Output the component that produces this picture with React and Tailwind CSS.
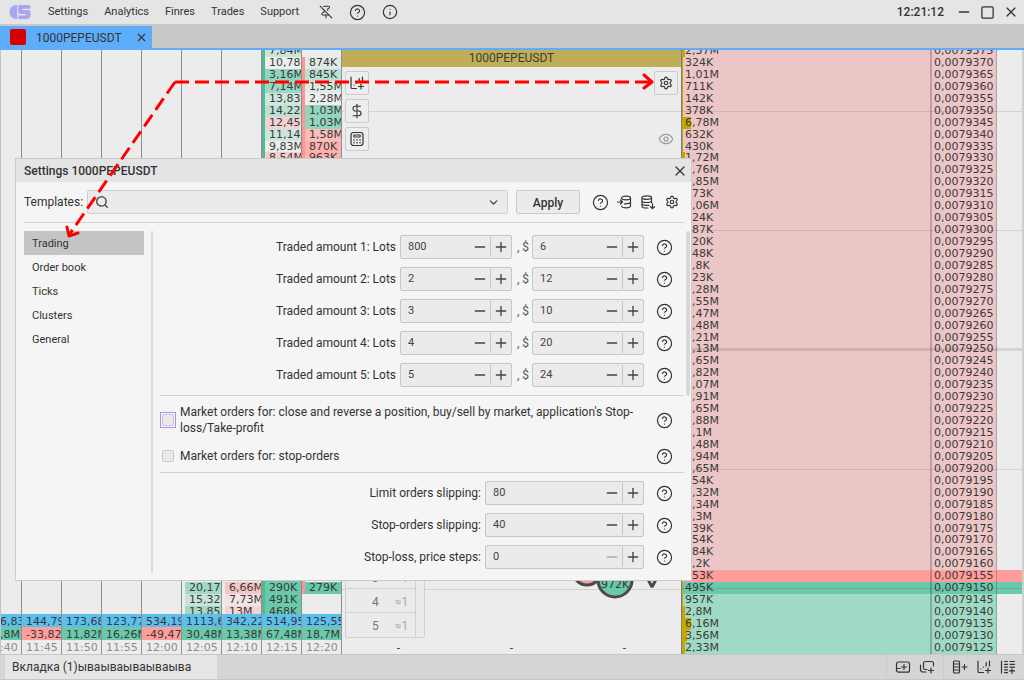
import React, { useState } from "react";
import {
  ChevronDown,
  CircleQuestionMark,
  DollarSign,
  Eye,
  Info,
  Minus,
  PinOff,
  Plus,
  Search,
  Settings,
  Square,
  X,
} from "lucide-react";

const MENU = ["Settings", "Analytics", "Finres", "Trades", "Support"];
const SECTIONS = ["Trading", "Order book", "Ticks", "Clusters", "General"];

// Order book volumes, from the highest price down
const VOLUMES = [
  "2,37M", "324K", "1,01M", "711K", "142K", "378K", "6,78M", "632K", "430K", "1,72M",
  "1,76M", "1,85M", "573K", "1,06M", "324K", "187K", "220K", "348K", "9,8K", "423K",
  "1,28M", "1,55M", "2,47M", "1,48M", "1,21M", "2,13M", "1,65M", "1,82M", "1,07M", "1,91M",
  "2,65M", "1,88M", "1,1M", "1,48M", "1,94M", "1,65M", "354K", "1,32M", "2,34M", "1,3M",
  "239K", "454K", "384K", "8,2K", "153K", "495K", "957K", "2,8M", "6,16M", "3,56M", "2,33M",
];
const TOP_PRICE = 79375;
const BEST_ASK = 44;
const BEST_BID = 45;
const BAR_WIDTHS = { 0: 3, 6: 9, 9: 3, 47: 3, 48: 9, 49: 5, 50: 3 };

const GREEN_BAR = "border-[#54b998]";
const RED_BAR = "border-[#ff9494]";

// Each column: time, two totals and the cells that are filled, keyed by price row
const CLUSTERS = [
  { time: "11:40", total: "226,83", delta: "22,8M", up: true, cells: {} },
  { time: "11:45", total: "144,79", delta: "-33,82", up: false, cells: {} },
  { time: "11:50", total: "173,68", delta: "11,82M", up: true, cells: {} },
  { time: "11:55", total: "123,77", delta: "16,26M", up: true, cells: {} },
  { time: "12:00", total: "534,19", delta: "-49,47", up: false, cells: {} },
  {
    time: "12:05", total: "1113,6", delta: "30,48M", up: true,
    cells: {
      44: ["18,42", "bg-[#ececec]"],
      45: ["20,17", "bg-[#a3d9c6]"],
      46: ["15,32", "bg-[#c9e3da]"],
      47: ["13,85", "bg-[#a3d9c6]"],
    },
  },
  {
    time: "12:10", total: "342,22", delta: "13,38M", up: true,
    cells: {
      44: ["9,41M", "bg-[#ececec]"],
      45: ["6,66M", "bg-[#f6c6c6]"],
      46: ["7,73M", "bg-[#f0e4e4]"],
      47: ["13M", "bg-[#f3d3d3]"],
    },
  },
  {
    time: "12:15", total: "514,95", delta: "67,48M", up: true, bar: GREEN_BAR,
    cells: {
      0: ["7,84M", "bg-[#c8e6da]"],
      1: ["10,78", "bg-[#f0efef]"],
      2: ["3,16M", "bg-[#93d4bc]"],
      3: ["7,14M", "bg-[#9bd8c1]"],
      4: ["13,83", "bg-[#cfe7de]"],
      5: ["14,22", "bg-[#bce1d3]"],
      6: ["12,45", "bg-[#f4d2d2]"],
      7: ["11,14", "bg-[#cbe6dc]"],
      8: ["9,83M", "bg-[#eceeed]"],
      9: ["8,54M", "bg-[#f6cccc]"],
      44: ["312K", "bg-[#69c9aa]"],
      45: ["290K", "bg-[#69c9aa]"],
      46: ["491K", "bg-[#69c9aa]"],
      47: ["468K", "bg-[#69c9aa]"],
    },
  },
  {
    time: "12:20", total: "125,55", delta: "18,7M", up: true, bar: RED_BAR,
    cells: {
      1: ["874K", "bg-[#e0ebe7]"],
      2: ["845K", "bg-[#b9e0d2]"],
      3: ["1,55M", "bg-[#dcebe5]"],
      4: ["2,28M", "bg-[#eeeeee]"],
      5: ["1,03M", "bg-[#93d6be]"],
      6: ["1,03M", "bg-[#93d6be]"],
      7: ["1,58M", "bg-[#fbbcbc]"],
      8: ["870K", "bg-[#ffb0b0]"],
      9: ["963K", "bg-[#ffb0b0]"],
      44: ["1,2M", "bg-[#ececec]"],
      45: ["279K", "bg-[#69c9aa]"],
    },
  },
];

/* ---------- icons that lucide does not have ---------- */

const Glyph = ({ children, size = 16, className = "" }) => (
  <svg
    width={size}
    height={size}
    viewBox="0 0 16 16"
    fill="none"
    stroke="currentColor"
    strokeWidth="1.2"
    strokeLinecap="round"
    strokeLinejoin="round"
    aria-hidden="true"
    className={className}
  >
    {children}
  </svg>
);

const Logo = () => (
  <svg width="22" height="16" viewBox="0 0 22 16" aria-hidden="true">
    <path d="M8.200 1v14H7.500C3.500 15 0.500 12 0.500 8S3.500 1 7.500 1Z" fill="#a9a6f2" />
    <path d="M10 1h9.500a2 2 0 0 1 2 2v1.700H13.500v1.300h6a2 2 0 0 1 2 2V11a4 4 0 0 1-4 4H9.200v-3.600h7.300v-1.300H11a2 2 0 0 1-1.800-2V2a1 1 0 0 1 .8-1Z" fill="#a9a6f2" />
  </svg>
);

const ChartPlusIcon = () => (
  <Glyph>
    <path d="M2 2v10.500a1 1 0 0 0 1 1h4.500M5 10.200l.1-.1M7.500 8.200v-.1M10.200 3.500v3.500M13.500 2v5M9.500 11.500h5M12 9v5" />
  </Glyph>
);

const CalculatorIcon = () => (
  <Glyph>
    <rect x="2" y="1.500" width="12" height="13" rx="2.500" />
    <rect x="4.800" y="4" width="6.400" height="2" rx="0.500" />
    <path d="M5 9h.1M8 9h.1M11 9h.1M5 11.700h.1M8 11.700h.1M11 11.700h.1" strokeWidth="1.600" />
  </Glyph>
);

const DbImportIcon = () => (
  <Glyph>
    <path d="M5.500 4c0-1 1.800-1.800 4.500-1.800s4.500.8 4.500 1.800v8c0 1-1.800 1.800-4.500 1.800S5.500 13 5.500 12M5.500 4c0 1 1.800 1.800 4.500 1.800s4.500-.8 4.500-1.800M8.500 9.800c3.300.1 6-.6 6-1.800M1.500 8h5M4.500 6l2 2-2 2" />
  </Glyph>
);

const DbSaveIcon = () => (
  <Glyph>
    <path d="M2 3.600C2 2.600 4 1.800 6.500 1.800s5 .8 5 1.800-2.500 1.800-5 1.800S2 4.600 2 3.600ZM2 3.600v8.600c0 1 2 1.800 4.500 1.800H8M11.500 3.600v5M2 6.700c0 1 2 1.800 4.500 1.800s5-.8 5-1.800M2 9.600c0 1 2 1.800 4.500 1.800H9M12.500 9.500v5M10.500 12.700l2 1.900 2-1.900" />
  </Glyph>
);

const AddTabIcon = () => (
  <Glyph>
    <path d="M6.500 13.200H3.500a2 2 0 0 1-2-2V5a2 2 0 0 1 2-2h9a2 2 0 0 1 2 2v6.200a2 2 0 0 1-2 2H6.500M1.500 9.500h3.500M6.500 8h5M9 5.500v5" />
  </Glyph>
);

const AddWindowIcon = () => (
  <Glyph>
    <path d="M8 10.500H6A1.500 1.500 0 0 1 4.500 9V4.500A2 2 0 0 1 6.500 2.500h6a2 2 0 0 1 2 2V7M1.500 6v4.500a2.500 2.500 0 0 0 2.500 2.500h3M9.500 11.500h5M12 9v5" />
  </Glyph>
);

const AddBookIcon = () => (
  <Glyph>
    <path d="M1.500 3a1 1 0 0 1 1-1h4a1 1 0 0 1 1 1v10a1 1 0 0 1-1 1h-4a1 1 0 0 1-1-1ZM1.500 5h6M1.500 8h6M1.500 11h6M10 8h5M12.500 5.500v5" />
  </Glyph>
);

const AddTradesIcon = () => (
  <Glyph>
    <path d="M1.500 2v12M4.500 2.500h3M4.500 5.300h3M4.500 8.100h3M4.500 10.900h3M4.500 13.700h3M10 2.500h4.500M10 5.300h4.500M10 8.100h4.500M9.500 11.900h5M12 9.800v4.500" />
  </Glyph>
);

/* ---------- shared controls ---------- */

const HelpButton = () => (
  <button aria-label="Help" className="flex size-6 shrink-0 items-center justify-center text-[#333]">
    <CircleQuestionMark size={17} strokeWidth={1.7} />
  </button>
);

const NumberField = ({ id, label, initial, className }) => {
  const [value, setValue] = useState(initial);
  const step = (d) => setValue((v) => Math.max(0, Number(v) + d));

  return (
    <div className={`flex h-6 items-center rounded-xs border border-[#c6c6c6] bg-[#ebebeb] ${className}`}>
      <input
        id={id}
        aria-label={label}
        value={value}
        onChange={(e) => setValue(e.target.value)}
        className="w-0 flex-1 bg-transparent pl-[7px] text-[11px] text-[#444] outline-none"
      />
      <button
        aria-label="Decrease"
        onClick={() => step(-1)}
        disabled={Number(value) === 0}
        className="flex h-full w-5 items-center justify-center text-[#444] disabled:text-[#aaa]"
      >
        <Minus size={16} strokeWidth={2} />
      </button>
      <button
        aria-label="Increase"
        onClick={() => step(1)}
        className="flex h-5 w-[21px] items-center justify-center border-l border-[#c6c6c6] text-[#444]"
      >
        <Plus size={16} strokeWidth={2} />
      </button>
    </div>
  );
};

const AmountRow = ({ n, lots, usd }) => (
  <div className="flex items-center justify-end leading-[18px]">
    <label htmlFor={`lots-${n}`} className="mr-1">Traded amount {n}: Lots</label>
    <NumberField id={`lots-${n}`} initial={lots} className="w-28" />
    <label htmlFor={`usd-${n}`} className="w-5 text-right whitespace-pre text-[#555]">, $ </label>
    <NumberField id={`usd-${n}`} initial={usd} className="w-28" />
    <div className="ml-2"><HelpButton /></div>
  </div>
);

const SlippingRow = ({ id, label, value }) => (
  <div className="flex items-center justify-end">
    <label htmlFor={id} className="mr-1">{label}</label>
    <NumberField id={id} initial={value} className="w-[159px]" />
    <div className="ml-2"><HelpButton /></div>
  </div>
);

/* ---------- window chrome ---------- */

const TitleBar = () => (
  <header className="flex h-6 shrink-0 items-center bg-[#e5e5e5] pl-[9px] text-[#333]">
    <Logo />
    <nav className="ml-[17px] flex gap-4 text-[11px]">
      {MENU.map((m) => (
        <button key={m}>{m}</button>
      ))}
    </nav>
    <div className="ml-5 flex items-center gap-4">
      <button aria-label="Unpin"><PinOff size={14} strokeWidth={1.8} /></button>
      <button aria-label="Help"><CircleQuestionMark size={17} strokeWidth={1.7} /></button>
      <button aria-label="About"><Info size={16} strokeWidth={1.7} /></button>
    </div>
    <time className="ml-auto text-xs font-medium">12:21:12</time>
    <div className="mr-[5px] ml-3 flex items-center gap-2">
      <button aria-label="Minimize"><Minus size={16} strokeWidth={2} /></button>
      <button aria-label="Maximize"><Square size={15} strokeWidth={2} /></button>
      <button aria-label="Close"><X size={16} strokeWidth={1.8} /></button>
    </div>
  </header>
);

const TabStrip = () => (
  <div className="flex h-[26px] shrink-0 items-end border-b-2 border-[#5eadfb] bg-[#c8c8c8]">
    <div className="flex h-[22px] w-[152px] items-center bg-[#5eadfb] pl-2.5 text-[#333]">
      <span className="size-4 rounded-xs bg-[#d80000]" />
      <span className="ml-2.5 pt-0.5 text-xs">1000PEPEUSDT</span>
      <button aria-label="Close tab" className="ml-auto pr-1"><X size={13} strokeWidth={2} /></button>
    </div>
  </div>
);

const BottomBar = () => (
  <footer className="flex h-[26px] shrink-0 items-center border-y border-[#c6c6c6] bg-[#d5d5d5] pl-[5px] text-[#333]">
    <button className="h-full w-[212px] bg-[#e5e5e5] pl-[7px] text-left text-xs">
      Вкладка (1)ываываываываыва
    </button>
    <div className="ml-auto flex h-full items-center gap-2 border-l border-[#cacaca] px-2">
      <button aria-label="Add tab"><AddTabIcon /></button>
      <button aria-label="Add window"><AddWindowIcon /></button>
    </div>
    <div className="flex h-full items-center gap-2 border-l border-[#cacaca] px-2">
      <button aria-label="Add order book"><AddBookIcon /></button>
      <button aria-label="Add chart"><ChartPlusIcon /></button>
      <button aria-label="Add trades"><AddTradesIcon /></button>
    </div>
  </footer>
);

/* ---------- workspace panes ---------- */

const ClusterColumn = ({ time, total, delta, up, bar, cells }) => (
  <div className="flex w-10 shrink-0 flex-col overflow-hidden border-r border-[#8f8f8f]">
    <div className="min-h-0 flex-1 overflow-hidden">
      {/* taller than its box, so the rows line up with the order book */}
      <div className="-mt-[5px] flex h-[calc(100%+45px)] flex-col">
        {VOLUMES.map((_, i) => {
          const cell = cells[i];
          return (
            <div
              key={i}
              className={`flex min-h-0 flex-1 basis-0 items-center border-l-[3px] ${cell && bar ? bar : "border-transparent"}`}
            >
              {cell && (
                <span className={`h-full w-full overflow-hidden pl-1 leading-3 ${cell[1]}`}>{cell[0]}</span>
              )}
            </div>
          );
        })}
      </div>
    </div>
    <div className="h-10 shrink-0 *:h-[13px] *:overflow-hidden *:pl-1 *:leading-4">
      <p className="bg-[#5bc0ee]">{total}</p>
      <p className={up ? "bg-[#69c9aa]" : "bg-[#ff9d9d]"}>{delta}</p>
      <p className="text-[#8c8c8c]">{time}</p>
    </div>
  </div>
);

const ClusterPane = () => (
  <section className="flex w-[341px] shrink-0 justify-end overflow-hidden font-['DejaVu_Sans',sans-serif] text-[11px] text-[#3a3a3a]">
    {CLUSTERS.map((c) => (
      <ClusterColumn key={c.time} {...c} />
    ))}
  </section>
);

const ToolButton = ({ label, children }) => (
  <button
    aria-label={label}
    className="flex size-6 items-center justify-center rounded-xs border border-[#cccccc] bg-[#ededed] text-[#333]"
  >
    {children}
  </button>
);

const ChartPane = () => (
  <section className="relative flex min-w-0 flex-1 flex-col">
    <div className="absolute inset-x-0 top-[61px] h-px bg-[#d2d2d2]" />
    <div className="absolute inset-x-0 bottom-16 h-px bg-[#d2d2d2]" />

    <h2 className="bg-[#bfad57] text-center text-xs leading-[17px] text-[#3d3d3d]">1000PEPEUSDT</h2>
    <div className="relative flex items-start justify-between px-[3px] pt-1">
      <div className="flex flex-col gap-1">
        <ToolButton label="Add indicator"><ChartPlusIcon /></ToolButton>
        <ToolButton label="Trading amounts"><DollarSign size={16} strokeWidth={1.6} /></ToolButton>
        <ToolButton label="Calculator"><CalculatorIcon /></ToolButton>
      </div>
      <div className="flex flex-col items-center gap-9">
        <ToolButton label="Chart settings"><Settings size={14} strokeWidth={2} /></ToolButton>
        <button aria-label="Show" className="text-[#9a9a9a]"><Eye size={16} strokeWidth={1.8} /></button>
      </div>
    </div>

    {/* trades on the tick chart */}
    <svg width="120" height="60" className="absolute right-0 bottom-11" aria-hidden="true">
      <circle cx="26" cy="21" r="14" fill="#ff9d9d" stroke="#4a4a4a" strokeWidth="3" />
      <circle cx="54" cy="30" r="17" fill="#69c9aa" stroke="#4a4a4a" strokeWidth="3" />
      <text x="54" y="38" textAnchor="middle" fontSize="11" fontFamily="DejaVu Sans, sans-serif" fill="#3a3a3a">972K</text>
      <path d="M82 20l9 17 9-17" fill="none" stroke="#4a4a4a" strokeWidth="3" strokeLinejoin="bevel" />
    </svg>

    <div className="relative mt-auto mb-4 ml-[3px] flex w-20 rounded-xs border border-[#d0d0d0] bg-[#ebebeb] text-xs text-[#777]">
      <ul className="flex-1 divide-y divide-[#d0d0d0]">
        {[3, 4, 5].map((n) => (
          <li key={n} className="flex h-6 items-center gap-4 pt-0.5 pl-[26px]">
            <span>{n}</span>
            <span className="text-[#a8a8a8]">≈1</span>
          </li>
        ))}
      </ul>
      <div className="w-[9px] border-l border-[#d0d0d0]" />
    </div>
    <div className="absolute inset-x-0 bottom-0 grid h-3.5 grid-cols-3 text-center text-xs text-[#444]">
      <span>-</span>
      <span>-</span>
      <span>-</span>
    </div>
  </section>
);

const OrderBook = () => (
  <section className="flex w-[343px] shrink-0 flex-col overflow-hidden border-r-2 border-l border-r-[#cfcfcf] border-l-[#7d7d7d] font-['DejaVu_Sans',sans-serif] text-[11px] text-[#3a3a3a]">
    <table className="-mt-[5px] flex min-h-0 flex-1 flex-col">
      <tbody className="flex min-h-0 flex-1 flex-col">
        {VOLUMES.map((volume, i) => {
          const best = i === BEST_ASK ? "bg-[#ff9d9d]" : i === BEST_BID ? "bg-[#69c9aa]" : "";
          const side = best || (i < BEST_ASK ? "bg-[#ecc6c6]" : "bg-[#a0dac4]");
          const grid = i % 10 === 5;
          return (
            <tr key={i} className={`relative flex min-h-0 flex-1 basis-0 leading-3 ${best}`}>
              <td className={`flex-1 overflow-hidden p-0 pl-[3px] ${side}`}>
                <span
                  className="absolute inset-y-0 left-0 bg-[#c8a800]"
                  style={{ width: BAR_WIDTHS[i] ?? 1 }}
                />
                <span className="relative">{volume}</span>
              </td>
              <td className={`w-[67px] overflow-hidden border-r border-l-2 border-black/20 p-0 pl-0.5 ${side}`}>
                0,00{TOP_PRICE - i * 5}
              </td>
              <td className="w-[25px] p-0">
                {grid && (
                  <span className={`absolute inset-x-0 top-1/2 bg-black/10 ${i === 25 ? "-mt-px h-[3px]" : "h-px"}`} />
                )}
              </td>
            </tr>
          );
        })}
      </tbody>
    </table>
  </section>
);

/* ---------- settings dialog ---------- */

const SettingsDialog = () => {
  const [section, setSection] = useState("Trading");
  const [template, setTemplate] = useState("");

  return (
    <div
      role="dialog"
      aria-label="Settings 1000PEPEUSDT"
      className="absolute top-[158px] left-[15px] w-[677px] border border-[#cbcbcb] bg-[#f5f5f5] text-xs text-[#333]"
    >
      <div className="flex h-[23px] items-center justify-between bg-[#e4e4e4] pr-[3px] pl-2">
        <h1 className="font-medium">Settings 1000PEPEUSDT</h1>
        <button aria-label="Close"><X size={16} strokeWidth={1.8} /></button>
      </div>

      <div className="mr-[7px] ml-2 flex items-center border-b border-[#d2d2d2] py-2">
        <label htmlFor="template">Templates:</label>
        <div className="ml-1 flex h-6 flex-1 items-center rounded-xs border border-[#cfcfcf] bg-[#ebebeb] px-[7px]">
          <Search size={14} strokeWidth={2.6} className="text-[#555]" />
          <input
            id="template"
            value={template}
            onChange={(e) => setTemplate(e.target.value)}
            className="flex-1 bg-transparent px-2 outline-none"
          />
          <button aria-label="Open list"><ChevronDown size={13} strokeWidth={2} /></button>
        </div>
        <button className="ml-2 h-6 w-16 rounded-xs border border-[#c9c9c9] bg-[#ebebeb] pt-0.5 font-medium">Apply</button>
        <div className="ml-2 flex">
          <HelpButton />
          <button aria-label="Load template" className="flex size-6 items-center justify-center"><DbImportIcon /></button>
          <button aria-label="Save template" className="flex size-6 items-center justify-center"><DbSaveIcon /></button>
          <button aria-label="Template settings" className="flex size-6 items-center justify-center">
            <Settings size={14} strokeWidth={2} />
          </button>
        </div>
      </div>

      <div className="flex py-2 pr-px pl-2">
        <ul className="w-[120px] shrink-0 text-[11px]">
          {SECTIONS.map((s) => (
            <li key={s}>
              <button
                onClick={() => setSection(s)}
                className={`h-6 w-full pt-0.5 pl-2 text-left ${s === section ? "bg-[#c5c5c5]" : ""}`}
              >
                {s}
              </button>
            </li>
          ))}
        </ul>

        <div className="ml-[7px] flex-1 border-l-2 border-[#dadada] pb-[3px] pl-[7px]">
          <div className="flex flex-col gap-2 border-b border-[#d2d2d2] pt-1 pr-2 pb-2">
            <AmountRow n={1} lots="800" usd="6" />
            <AmountRow n={2} lots="2" usd="12" />
            <AmountRow n={3} lots="3" usd="10" />
            <AmountRow n={4} lots="4" usd="20" />
            <AmountRow n={5} lots="5" usd="24" />
          </div>

          <div className="flex flex-col gap-1 border-b border-[#d2d2d2] py-1 pr-2">
            <div className="flex items-center gap-1">
              <span className="flex size-4 shrink-0 items-center justify-center border border-[#b48ef0]">
                <input id="market-close" type="checkbox" className="size-3 appearance-none rounded-xs border border-[#cacaca] bg-[#e9e9e9] checked:bg-[#8f8f8f]" />
              </span>
              <label htmlFor="market-close" className="flex-1 py-1 pr-3 leading-4">
                Market orders for: close and reverse a position, buy/sell by market, application's Stop-loss/Take-profit
              </label>
              <HelpButton />
            </div>
            <div className="flex items-center gap-1">
              <span className="flex size-4 shrink-0 items-center justify-center">
                <input id="market-stop" type="checkbox" className="size-3 appearance-none rounded-xs border border-[#cacaca] bg-[#e9e9e9] checked:bg-[#8f8f8f]" />
              </span>
              <label htmlFor="market-stop" className="flex-1">Market orders for: stop-orders</label>
              <HelpButton />
            </div>
          </div>

          <div className="flex flex-col gap-2 pt-2 pr-2">
            <SlippingRow id="slip-limit" label="Limit orders slipping:" value="80" />
            <SlippingRow id="slip-stop" label="Stop-orders slipping:" value="40" />
            <SlippingRow id="stop-loss" label="Stop-loss, price steps:" value="0" />
          </div>
        </div>

        <div className="ml-0.5 h-[165px] w-1 rounded-xs bg-[#d8d8d8]" />
      </div>
    </div>
  );
};

const HintArrows = () => (
  <svg className="pointer-events-none absolute inset-0 h-full w-full" fill="none" stroke="#ff0000" strokeWidth="3" aria-hidden="true">
    <path d="M175 82L69 235" strokeDasharray="14 6" />
    <path d="M175 82H651" strokeDasharray="14 6" />
    <path d="M67 227l2 9 9-3M644 75l8 7-8 6" strokeLinecap="round" strokeLinejoin="round" />
  </svg>
);

const App = () => (
  <div className="relative flex h-screen flex-col overflow-hidden bg-[#ececec] font-[Roboto,sans-serif]">
    <TitleBar />
    <TabStrip />
    <main className="flex min-h-0 flex-1 border-l border-[#c4c4c4]">
      <ClusterPane />
      <ChartPane />
      <OrderBook />
    </main>
    <BottomBar />
    <SettingsDialog />
    <HintArrows />
  </div>
);

export default App;
